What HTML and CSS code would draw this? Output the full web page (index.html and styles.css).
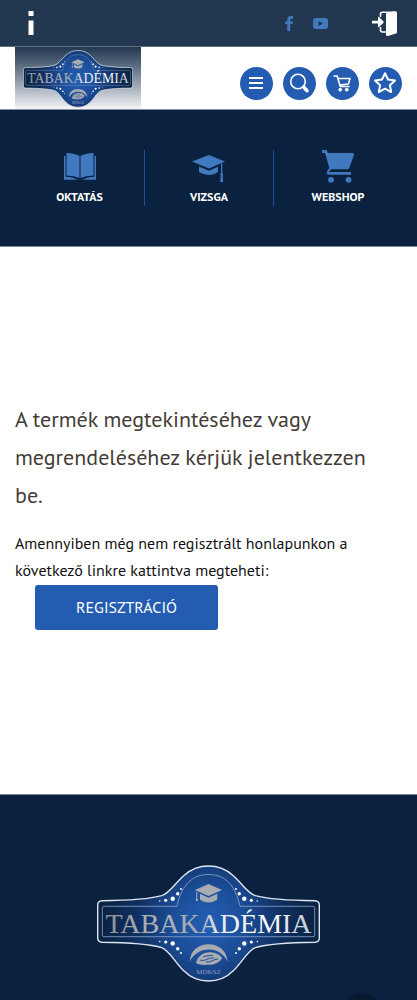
FILE: index.html
```html
<!DOCTYPE html>
<html lang="hu">
<head>
<meta charset="utf-8">
<meta name="viewport" content="width=device-width, initial-scale=1">
<title>Tabakadémia</title>
<link rel="stylesheet" href="styles.css">
</head>
<body>
<div class="topbar">
  <a class="info" href="#" aria-label="Információ">
    <svg width="6" height="25" viewBox="0 0 6 25" fill="#fff"><path d="M.5 0h5v5h-5zM.5 9.500h5V24h-5z"/></svg>
  </a>
  <div class="social">
    <a href="#" aria-label="Facebook">
      <svg width="8" height="15" viewBox="0 0 8 15" fill="#4179be"><path d="M8 .2v2.600H6.300c-.8 0-1.100.4-1.100 1.100v1.600H8L7.600 8.100H5.200V15H2.300V8.100H0V5.500h2.300V3.700C2.300 1.400 3.700 0 5.800 0 6.800 0 7.600.1 8 .2z"/></svg>
    </a>
    <a href="#" aria-label="YouTube">
      <svg width="15" height="11" viewBox="0 0 15 11"><rect width="15" height="11" rx="3" fill="#4179be"/><path d="M5.500 3v5l4.500-2.500z" fill="#223750"/></svg>
    </a>
  </div>
  <a class="login" href="#" aria-label="Belépés">
    <svg width="25" height="25" viewBox="0 0 25 25"><path d="M8.500 6V3.200Q8.500 1.300 10.400 1.300H23M8.500 16v3Q8.500 21 10.400 21H15" fill="none" stroke="#fff" stroke-width="1.600"/><path d="M14 2.800Q14 2 15 1.800L23 .3Q25 0 25 2v19q0 1.200-1 1.500L16 25q-2 .4-2-1.500zM0 9.700h6V6.500q0-1.200 1-.5l4.500 4.500q.6.600 0 1.200L7 16q-1 .8-1-.4v-3H0z" fill="#fff"/></svg>
  </a>
</div>

<header class="header">
  <a class="brand" href="#" aria-label="Tabakadémia">
    <svg class="brand-logo" viewBox="0 0 223 117">
      <defs>
        <radialGradient id="glow" gradientUnits="userSpaceOnUse" cx="111.500" cy="58" r="105">
          <stop offset="0" stop-color="#2360b5"/><stop offset=".35" stop-color="#1c4d98"/><stop offset=".7" stop-color="#102f60"/><stop offset="1" stop-color="#0a2342"/>
        </radialGradient>
        <linearGradient id="letters" gradientUnits="userSpaceOnUse" x1="10" y1="0" x2="213" y2="0">
          <stop offset="0" stop-color="#8d9199"/><stop offset=".25" stop-color="#b3b5ba"/><stop offset=".45" stop-color="#a5a9b1"/><stop offset=".55" stop-color="#e6eaf0"/><stop offset=".8" stop-color="#fff"/><stop offset="1" stop-color="#c3cad3"/>
        </linearGradient>
        <g id="dots" fill="#fff">
          <circle cx="62.700" cy="36" r=".8"/><circle cx="68.700" cy="35.300" r="1.600"/><circle cx="75.700" cy="33.700" r="2.200"/><circle cx="80.700" cy="28.700" r="1.700"/><circle cx="84" cy="24" r="1"/>
          <circle cx="62.700" cy="76.500" r=".8"/><circle cx="68.700" cy="77" r="1.600"/><circle cx="75.700" cy="78.500" r="2.200"/><circle cx="80.700" cy="83.700" r="1.700"/><circle cx="84" cy="88" r="1"/>
        </g>
        <g id="emblem">
          <path fill="url(#glow)" stroke="#dfe6ef" stroke-width="1.400" d="M5 35.700C32 35.500 53 34 64.700 30.700C73 28 79 17 87 10.500C94 4 102 1 111.500 1S129 4 136 10.500C144 17 150 28 158.300 30.700C170 34 191 35.500 218 35.700Q222.300 36 222.300 40V73Q222.300 77 218 77.200C191 77.500 170 79 158.300 82.700C150 86 144 99 136 106C129 113 121 116 111.500 116S94 113 87 106C79 99 73 86 64.700 82.700C53 79 32 77.500 5 77.200Q.7 77 .7 73V40Q.7 36 5 35.700Z"/>
          <path fill="none" stroke="#8ea6cb" stroke-width=".8" d="M7 41.300H80C84 24 92 9.500 111.500 9.500S139 24 143 41.300H216Q217.700 41.300 217.700 43V70Q217.700 71.700 216 71.700H7Q5.300 71.700 5.300 70V43Q5.300 41.300 7 41.300Z"/>
          <use href="#dots"/><use href="#dots" transform="matrix(-1 0 0 1 223 0)"/>
          <path fill="#a7abb2" d="M98 25l13.500-6L125 25l-13.500 6zM103 28.800l8.500 3.900 8.700-3.900v6q-4 2.700-8.700 2.700t-8.500-2.700zM99.300 26.500h1V33l.8 3h-2.400l.6-3z"/>
          <path fill="#a7abb2" d="M93 96.500C93 86 101 79.300 111.500 79.300S130 86 130.500 96.500C127 89 120 84.500 112 84.500S96 89 93 96.500ZM99 98c1-5 5-9.500 11-10.500 7-1 13 2 15 5.500-2 4.500-8 7-13 6.800-4-.2-8 1-13-1.800z"/>
          <path fill="none" stroke="#1d4f9c" stroke-width="1" d="M103 95c5 2 9-3 14-2M106 92c5-2 8-1 10-2M109 97c5 1 7-3 12-3"/>
          <text x="111.500" y="67.500" text-anchor="middle" font-family="Liberation Serif, serif" font-size="28" fill="url(#letters)">TABAKADÉMIA</text>
          <text x="111.500" y="108.500" text-anchor="middle" font-family="Liberation Serif, serif" font-size="7" fill="#8fa1c0">MDKSZ</text>
        </g>
      </defs>
      <use href="#emblem"/>
    </svg>
  </a>
  <div class="tools">
    <button class="tool" type="button" aria-label="Menü">
      <svg width="32" height="32" viewBox="0 0 32 32" stroke="#fff" stroke-width="2"><path d="M9 11h14M9 16h14M9 21h14"/></svg>
    </button>
    <button class="tool" type="button" aria-label="Keresés">
      <svg width="32" height="32" viewBox="0 0 32 32" fill="none" stroke="#fff" stroke-linecap="round"><circle cx="15" cy="14.500" r="7.300" stroke-width="1.600"/><path d="M20 19.500l1.500 1.500" stroke-width="2"/><path d="M21.500 21l2.500 2.700" stroke-width="3.600"/></svg>
    </button>
    <button class="tool" type="button" aria-label="Kosár">
      <svg width="32" height="32" viewBox="0 0 32 32" fill="none" stroke="#fff" stroke-width="1.600" stroke-linejoin="round" stroke-linecap="round"><path d="M8 9h3.200l3 10.500H23M12 11.500h12l-1.600 5.500-8.800 1"/><circle cx="14.200" cy="22.700" r="1.400" fill="#fff" stroke-width="1"/><circle cx="20.700" cy="22.700" r="1.400" fill="#fff" stroke-width="1"/></svg>
    </button>
    <button class="tool" type="button" aria-label="Kedvencek">
      <svg width="32" height="32" viewBox="0 0 32 32" fill="none" stroke="#fff" stroke-width="2" stroke-linejoin="round"><path d="M16 6.200l3 6.300 7 .9-5.100 4.800 1.300 6.900L16 21.700l-6.200 3.400 1.300-6.900L6 13.400l7-.9z"/></svg>
    </button>
  </div>
</header>

<nav class="nav">
  <a href="#">
    <svg width="34" height="34" viewBox="0 0 34 34" fill="#4179be"><path d="M3.500 3Q11 3 16.500 6v22Q11 25.500 3.500 25.500zM30.500 3Q23 3 17.500 6v22q5.500-2.500 13-2.500zM1 6h1.500v20.700q7-.2 12.500 3H1zM33 6h-1.500v20.700q-7-.2-12.500 3H33z"/></svg>
    <span>OKTATÁS</span>
  </a>
  <a href="#">
    <svg width="34" height="34" viewBox="0 0 34 34" fill="#4179be"><path d="M0 11.500L17 5l16 6.500-16 7zM7 16.500l10 4.200 9-4v5Q22 25 17 25T7 22zM29 13.500h1.300V23q1.700 1.200.4 2.600l.5 6.400h-3l.5-6.400q-1.400-1.400.3-2.600z"/></svg>
    <span>VIZSGA</span>
  </a>
  <a href="#">
    <svg width="34" height="34" viewBox="0 0 34 34" fill="#4179be"><path d="M1 0h3.500q1.400 0 1.900 1.400L7 3h24.500q2 0 1.500 1.800L28.300 18q-.5 1.300-2 1.300H10.500q-2.200.5-2.300 2.700H30v2.700H8q-2.200 0-2.200-2.200 0-1.500 2.600-4.500L4 3H1z"/><circle cx="10" cy="29.800" r="2.900"/><circle cx="27.500" cy="29.800" r="2.900"/></svg>
    <span>WEBSHOP</span>
  </a>
</nav>

<main class="content">
  <h1>A termék megtekintéséhez vagy megrendeléséhez kérjük jelentkezzen be.</h1>
  <p>Amennyiben még nem regisztrált honlapunkon a következő linkre kattintva megteheti:</p>
  <a class="register" href="#">REGISZTRÁCIÓ</a>
</main>

<footer class="footer">
  <svg class="footer-logo" viewBox="0 0 223 117" role="img" aria-label="Tabakadémia"><use href="#emblem"/></svg>
  <button class="to-top" type="button" aria-label="Vissza a tetejére"></button>
</footer>
</body>
</html>
```
FILE: styles.css
```css
* {
  box-sizing: border-box;
}

body {
  margin: 0;
  background: #fff;
  color: #111;
  font-family: "PT Sans", "Noto Sans", sans-serif;
  font-size: 16px;
  line-height: 27px;
}

a {
  color: inherit;
  text-decoration: none;
}

svg {
  display: block;
}

.topbar {
  display: flex;
  align-items: center;
  height: 47px;
  padding: 0 20px 0 28px;
  background: #223750;
  border-bottom: 1px solid #5f6f81;
}

.social {
  display: flex;
  align-items: center;
  gap: 20px;
  margin-left: auto;
  margin-right: 44px;
}

.header {
  display: flex;
  justify-content: space-between;
  height: 63px;
  padding: 0 15px;
  border-bottom: 1px solid #8592a1;
}

.brand {
  width: 126px;
  padding: 3px 8px 1px;
  background: linear-gradient(#223750, #6f7d90 40%, #f4f5f7);
}

.brand-logo {
  width: 100%;
}

.tools {
  display: flex;
  align-items: center;
  gap: 10px;
  padding-top: 10px;
}

.tool {
  width: 33px;
  height: 33px;
  padding: 0;
  border: 0;
  border-radius: 50%;
  background: #235cb0;
}

.nav {
  display: grid;
  grid-template-columns: repeat(3, 1fr);
  padding: 40px 15px;
  background: #0a2240;
  border-bottom: 1px solid #7b8a9b;
}

.nav a {
  display: flex;
  flex-direction: column;
  align-items: center;
  gap: 4px;
  height: 56px;
  color: #fff;
  font-size: 12px;
  font-weight: 700;
  line-height: 18px;
}

.nav a + a {
  border-left: 1px solid #20509a;
}

.content {
  padding: 153px 15px 164px;
}

h1 {
  margin: 0 0 16px;
  padding-right: 15px;
  color: #443c36;
  font-size: 22px;
  font-weight: 400;
  line-height: 38px;
}

p {
  margin: 0;
}

.register {
  display: inline-block;
  margin-top: 1px;
  margin-left: 20px;
  padding: 0 41px;
  border-radius: 3px;
  background: #235cb0;
  color: #fff;
  line-height: 45px;
}

.footer {
  position: relative;
  overflow: hidden;
  padding: 70px 0 18px;
  background: #0a2240;
  border-top: 1px solid #7b8a9b;
}

.footer-logo {
  width: 223px;
  margin: 0 auto;
}

.to-top {
  position: absolute;
  right: 37px;
  bottom: -29px;
  width: 36px;
  height: 36px;
  padding: 0;
  border: 0;
  border-radius: 50%;
  background: #091a30;
}
```
